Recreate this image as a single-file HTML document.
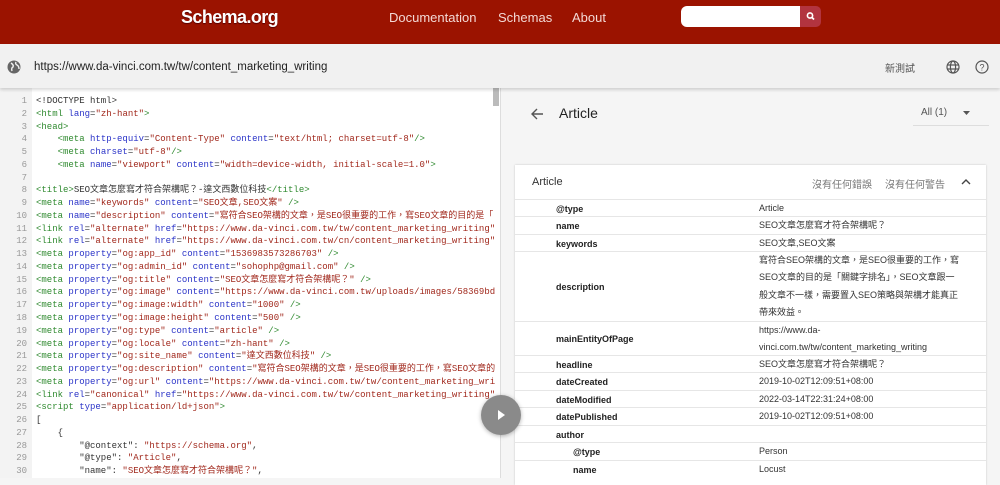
<!DOCTYPE html>
<html><head><meta charset="utf-8">
<style>
*{margin:0;padding:0;box-sizing:border-box}
body{width:1000px;height:478px;overflow:hidden;position:relative;background:#f5f5f5;font-family:"Liberation Sans","Noto Sans CJK TC",sans-serif}
#hdr{position:absolute;left:0;top:0;width:1000px;height:44px;background:#9b1300}
#logo{position:absolute;left:181px;top:7px;color:#fff;font-weight:bold;font-size:18px;letter-spacing:-0.6px;text-shadow:0 1px 1px #500}
.nav{position:absolute;top:10px;color:#f3d9d5;font-size:13px}
#sb{position:absolute;left:681px;top:6px;width:120px;height:21px;background:#fff;border-radius:6px 0 0 6px}
#sbtn{position:absolute;left:800px;top:6px;width:21px;height:21px;background:#b2343f;border-radius:0 5px 5px 0}
#bar{position:absolute;left:0;top:44px;width:1000px;height:44px;background:#f1f1f1;box-shadow:0 2px 3px rgba(0,0,0,.15);z-index:2}
#url{position:absolute;left:34px;top:16px;font-size:11.5px;color:#222}
#code{position:absolute;left:0;top:88px;width:500px;height:390px;background:#fff;overflow:hidden}
#gut{position:absolute;left:0;top:0;width:32px;height:390px;background:#f3f3f3}
pre{position:absolute;left:0;top:7px;font-family:"Liberation Mono","Noto Sans CJK TC",monospace;font-size:9px;line-height:12.76px;color:#333;white-space:pre}
.n{display:inline-block;width:27px;text-align:right;color:#999;margin-right:9px}
.t{color:#2f8a2f}.a{color:#2a33c8}.s{color:#a1281c}
#right{position:absolute;left:500px;top:88px;width:500px;height:390px;background:#f5f5f5;border-left:1px solid #ddd}
#card{position:absolute;left:14px;top:77px;width:471px;height:320px;background:#fff;box-shadow:0 0 2px rgba(0,0,0,.2)}
.row{position:absolute;left:0;width:471px;border-top:1px solid #e6e6e6;font-size:9px;color:#333}
.row b{position:absolute;left:41px;font-weight:bold;color:#222}
.row span{position:absolute;left:244px;width:200px;line-height:17.4px}
</style></head><body>
<div id="hdr">
<div id="logo">Schema.org</div>
<div class="nav" style="left:389px">Documentation</div>
<div class="nav" style="left:498px">Schemas</div>
<div class="nav" style="left:572px">About</div>
<div id="sb"></div><div id="sbtn"><svg width="21" height="21"><circle cx="10" cy="9.5" r="2.6" fill="none" stroke="#fff" stroke-width="1.6"/><line x1="12" y1="11.5" x2="14" y2="13.5" stroke="#fff" stroke-width="1.8"/></svg></div>
</div>
<div id="bar">
<svg style="position:absolute;left:7px;top:16px" width="14" height="14"><circle cx="7" cy="7" r="6.5" fill="#666"/><path d="M4 3 Q7 5 6 7 Q4 8 5 11 M9 2 Q8 4 10 5 Q12 6 12 9" stroke="#f1f1f1" stroke-width="1.4" fill="none"/></svg>
<div id="url" style="top:17px">https://www.da-vinci.com.tw/tw/content_marketing_writing</div>
<div style="position:absolute;left:885px;top:16px;font-size:10px;color:#555">新測試</div>
<svg style="position:absolute;left:946px;top:16px" width="14" height="14"><g fill="none" stroke="#555" stroke-width="1.2"><circle cx="7" cy="7" r="6"/><ellipse cx="7" cy="7" rx="2.6" ry="6"/><line x1="1" y1="5" x2="13" y2="5"/><line x1="1" y1="9" x2="13" y2="9"/></g></svg>
<svg style="position:absolute;left:975px;top:16px" width="14" height="14"><circle cx="7" cy="7" r="6" fill="none" stroke="#555" stroke-width="1.2"/><text x="7" y="10.5" font-size="9" text-anchor="middle" fill="#555" font-family="Liberation Sans">?</text></svg>
</div>
<div id="code"><div id="gut"></div>
<pre><span class="n">1</span>&lt;!DOCTYPE html&gt;
<span class="n">2</span><span class="t">&lt;html</span> <span class="a">lang</span>=<span class="s">"zh-hant"</span><span class="t">&gt;</span>
<span class="n">3</span><span class="t">&lt;head&gt;</span>
<span class="n">4</span>    <span class="t">&lt;meta</span> <span class="a">http-equiv</span>=<span class="s">"Content-Type"</span> <span class="a">content</span>=<span class="s">"text/html; charset=utf-8"</span><span class="t">/&gt;</span>
<span class="n">5</span>    <span class="t">&lt;meta</span> <span class="a">charset</span>=<span class="s">"utf-8"</span><span class="t">/&gt;</span>
<span class="n">6</span>    <span class="t">&lt;meta</span> <span class="a">name</span>=<span class="s">"viewport"</span> <span class="a">content</span>=<span class="s">"width=device-width, initial-scale=1.0"</span><span class="t">&gt;</span>
<span class="n">7</span>
<span class="n">8</span><span class="t">&lt;title&gt;</span>SEO文章怎麼寫才符合架構呢？-達文西數位科技<span class="t">&lt;/title&gt;</span>
<span class="n">9</span><span class="t">&lt;meta</span> <span class="a">name</span>=<span class="s">"keywords"</span> <span class="a">content</span>=<span class="s">"SEO文章,SEO文案"</span> <span class="t">/&gt;</span>
<span class="n">10</span><span class="t">&lt;meta</span> <span class="a">name</span>=<span class="s">"description"</span> <span class="a">content</span>=<span class="s">"寫符合SEO架構的文章，是SEO很重要的工作，寫SEO文章的目的是「</span>
<span class="n">11</span><span class="t">&lt;link</span> <span class="a">rel</span>=<span class="s">"alternate"</span> <span class="a">href</span>=<span class="s">"https://www.da-vinci.com.tw/tw/content_marketing_writing"</span>
<span class="n">12</span><span class="t">&lt;link</span> <span class="a">rel</span>=<span class="s">"alternate"</span> <span class="a">href</span>=<span class="s">"https://www.da-vinci.com.tw/cn/content_marketing_writing"</span>
<span class="n">13</span><span class="t">&lt;meta</span> <span class="a">property</span>=<span class="s">"og:app_id"</span> <span class="a">content</span>=<span class="s">"1536983573286703"</span> <span class="t">/&gt;</span>
<span class="n">14</span><span class="t">&lt;meta</span> <span class="a">property</span>=<span class="s">"og:admin_id"</span> <span class="a">content</span>=<span class="s">"sohophp@gmail.com"</span> <span class="t">/&gt;</span>
<span class="n">15</span><span class="t">&lt;meta</span> <span class="a">property</span>=<span class="s">"og:title"</span> <span class="a">content</span>=<span class="s">"SEO文章怎麼寫才符合架構呢？"</span> <span class="t">/&gt;</span>
<span class="n">16</span><span class="t">&lt;meta</span> <span class="a">property</span>=<span class="s">"og:image"</span> <span class="a">content</span>=<span class="s">"https://www.da-vinci.com.tw/uploads/images/58369bd</span>
<span class="n">17</span><span class="t">&lt;meta</span> <span class="a">property</span>=<span class="s">"og:image:width"</span> <span class="a">content</span>=<span class="s">"1000"</span> <span class="t">/&gt;</span>
<span class="n">18</span><span class="t">&lt;meta</span> <span class="a">property</span>=<span class="s">"og:image:height"</span> <span class="a">content</span>=<span class="s">"500"</span> <span class="t">/&gt;</span>
<span class="n">19</span><span class="t">&lt;meta</span> <span class="a">property</span>=<span class="s">"og:type"</span> <span class="a">content</span>=<span class="s">"article"</span> <span class="t">/&gt;</span>
<span class="n">20</span><span class="t">&lt;meta</span> <span class="a">property</span>=<span class="s">"og:locale"</span> <span class="a">content</span>=<span class="s">"zh-hant"</span> <span class="t">/&gt;</span>
<span class="n">21</span><span class="t">&lt;meta</span> <span class="a">property</span>=<span class="s">"og:site_name"</span> <span class="a">content</span>=<span class="s">"達文西數位科技"</span> <span class="t">/&gt;</span>
<span class="n">22</span><span class="t">&lt;meta</span> <span class="a">property</span>=<span class="s">"og:description"</span> <span class="a">content</span>=<span class="s">"寫符合SEO架構的文章，是SEO很重要的工作，寫SEO文章的</span>
<span class="n">23</span><span class="t">&lt;meta</span> <span class="a">property</span>=<span class="s">"og:url"</span> <span class="a">content</span>=<span class="s">"https://www.da-vinci.com.tw/tw/content_marketing_wri</span>
<span class="n">24</span><span class="t">&lt;link</span> <span class="a">rel</span>=<span class="s">"canonical"</span> <span class="a">href</span>=<span class="s">"https://www.da-vinci.com.tw/tw/content_marketing_writing"</span>
<span class="n">25</span><span class="t">&lt;script</span> <span class="a">type</span>=<span class="s">"application/ld+json"</span><span class="t">&gt;</span>
<span class="n">26</span>[
<span class="n">27</span>    {
<span class="n">28</span>        "@context": <span class="s">"https://schema.org"</span>,
<span class="n">29</span>        "@type": <span class="s">"Article"</span>,
<span class="n">30</span>        "name": <span class="s">"SEO文章怎麼寫才符合架構呢？"</span>,</pre>
<div style="position:absolute;left:493px;top:0;width:6px;height:18px;background:#bbb"></div>
</div>
<div id="right">
<svg style="position:absolute;left:29px;top:19px" width="14" height="14"><path d="M13 7H2M7 2L2 7l5 5" stroke="#555" stroke-width="1.4" fill="none"/></svg>
<div style="position:absolute;left:58px;top:17px;font-size:14px;color:#222">Article</div>
<div style="position:absolute;left:420px;top:19px;font-size:10px;color:#555">All (1)</div>
<svg style="position:absolute;left:462px;top:23px" width="8" height="5"><path d="M0 0h7l-3.5 4z" fill="#555"/></svg>
<div style="position:absolute;left:412px;top:37px;width:76px;height:1px;background:#ddd"></div>
<div id="card">
<div style="position:absolute;left:17px;top:11px;font-size:11px;color:#333">Article</div>
<div style="position:absolute;left:297px;top:11px;font-size:10px;color:#777">沒有任何錯誤</div>
<div style="position:absolute;left:370px;top:11px;font-size:10px;color:#777">沒有任何警告</div>
<svg style="position:absolute;left:446px;top:13px" width="10" height="7"><path d="M1 6l4-4 4 4" stroke="#444" stroke-width="1.4" fill="none"/></svg>
<div class="row" style="top:34px;height:18px"><b style="top:4px">@type</b><span style="top:0">Article</span></div>
<div class="row" style="top:51px;height:18px"><b style="top:4px">name</b><span style="top:0">SEO文章怎麼寫才符合架構呢？</span></div>
<div class="row" style="top:69px;height:17px"><b style="top:4px">keywords</b><span style="top:0">SEO文章,SEO文案</span></div>
<div class="row" style="top:86px;height:70px"><b style="top:30px">description</b><span style="top:0">寫符合SEO架構的文章，是SEO很重要的工作，寫SEO文章的目的是「關鍵字排名」，SEO文章跟一般文章不一樣，需要置入SEO策略與架構才能真正帶來效益。</span></div>
<div class="row" style="top:156px;height:34px"><b style="top:12px">mainEntityOfPage</b><span style="top:0">https://www.da-<br>vinci.com.tw/tw/content_marketing_writing</span></div>
<div class="row" style="top:190px;height:17px"><b style="top:4px">headline</b><span style="top:0">SEO文章怎麼寫才符合架構呢？</span></div>
<div class="row" style="top:207px;height:18px"><b style="top:4px">dateCreated</b><span style="top:0">2019-10-02T12:09:51+08:00</span></div>
<div class="row" style="top:225px;height:17px"><b style="top:4px">dateModified</b><span style="top:0">2022-03-14T22:31:24+08:00</span></div>
<div class="row" style="top:242px;height:18px"><b style="top:4px">datePublished</b><span style="top:0">2019-10-02T12:09:51+08:00</span></div>
<div class="row" style="top:260px;height:17px"><b style="top:4px">author</b></div>
<div class="row" style="top:277px;height:18px"><b style="top:4px;left:58px">@type</b><span style="top:0">Person</span></div>
<div class="row" style="top:295px;height:18px"><b style="top:4px;left:58px">name</b><span style="top:0">Locust</span></div>
</div>
</div>
<div style="position:absolute;left:481px;top:395px;width:40px;height:40px;border-radius:50%;background:#8a8a8a;box-shadow:0 1px 4px rgba(0,0,0,.3)"><svg width="40" height="40"><path d="M17 15l7 5-7 5z" fill="#fff"/></svg></div>
</body></html>
